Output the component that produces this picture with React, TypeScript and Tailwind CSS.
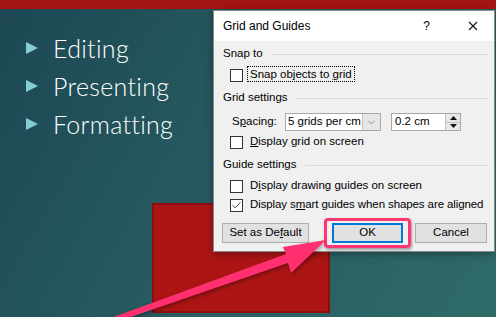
import { Check, ChevronDown } from 'lucide-react';

const bullets = ['Editing', 'Presenting', 'Formatting'];

// small section header with a rule running to the right
const GroupHeader = ({ label }: { label: string }) => (
  <div className="flex h-5 items-center pl-[9px] pr-[6px]">
    <span>{label}</span>
    <div className="ml-2 h-px flex-1 bg-[#dadada]" />
  </div>
);

const CheckRow = ({
  checked,
  children,
  className,
}: {
  checked?: boolean;
  children: React.ReactNode;
  className?: string;
}) => (
  <div className={`flex items-center pl-4 ${className ?? ''}`}>
    <div className="flex h-[13px] w-[13px] shrink-0 items-center justify-center border border-[#333] bg-white">
      {checked && <Check className="h-[11px] w-[11px] text-[#333]" strokeWidth={2} />}
    </div>
    <div className="ml-[7px]">{children}</div>
  </div>
);

const Btn = ({ children }: { children: React.ReactNode }) => (
  <div className="flex h-5 items-center justify-center border border-[#adadad] bg-[#e1e1e1]">{children}</div>
);

export default function App() {
  return (
    <div className="relative h-[317px] w-[496px] overflow-hidden bg-[linear-gradient(120deg,#1c4753_0%,#275a60_45%,#2e6b67_100%)] font-['Liberation_Sans',sans-serif]">
      {/* slide title bar */}
      <div className="h-[9px] bg-[#a51414]" />

      {/* bullets */}
      <div className="flex flex-col gap-[6px] pl-[26px] pt-[23px] font-['Lato',sans-serif] font-light text-white">
        {bullets.map((b) => (
          <div key={b} className="flex h-[32px] items-center">
            <svg width="12" height="12" viewBox="0 0 12 12" className="shrink-0">
              <polygon points="0,0 12,6 0,12" fill="#85cdd5" />
            </svg>
            <span className="ml-[15px] text-[25px] leading-none tracking-[0.3px]">{b}</span>
          </div>
        ))}
      </div>

      {/* red shape on the slide */}
      <div className="absolute left-[152px] top-[203px] h-[110px] w-[178px] border-2 border-[#8c0e0e] bg-[#ad1515]" />

      {/* dialog */}
      <div className="absolute left-[213px] top-[10px] h-[242px] w-[282px] whitespace-nowrap border border-[#8a8a8a] bg-[#f0f0f0] text-[11.5px] text-black shadow-[0_2px_8px_rgba(0,0,0,0.35)]">
        <div className="flex h-[30px] items-center bg-white pl-[9px] text-[12px]">
          <span>Grid and Guides</span>
          <span className="ml-auto mr-[38px]">?</span>
          <svg width="10" height="10" viewBox="0 0 10 10" className="mr-[16px]">
            <path d="M1 1L9 9M9 1L1 9" stroke="#111" strokeWidth="1.1" />
          </svg>
        </div>

        <div className="pt-[3px] leading-none">
          <GroupHeader label="Snap to" />
          <CheckRow className="h-[22px]">
            <span className="-ml-[3px] border border-dotted border-black px-[2px] py-[1px]">
              Snap objects to <u>g</u>rid
            </span>
          </CheckRow>

          <div className="mt-[2px]">
            <GroupHeader label="Grid settings" />
          </div>

          <div className="mt-[4px] flex h-5 items-center pl-[18px]">
            <span className="w-[53px]">
              S<u>p</u>acing:
            </span>
            <div className="flex h-[18px] w-[96px] items-center border border-[#a8a8a8] bg-white">
              <span className="pl-[2px]">5 grids per cm</span>
              <div className="ml-auto flex h-full w-[18px] items-center justify-center border-l border-[#c4c4c4] bg-[#e6e6e6]">
                <ChevronDown className="h-[11px] w-[11px] text-[#666]" strokeWidth={1.5} />
              </div>
            </div>
            <div className="ml-[10px] flex h-[18px] w-[70px] items-center border border-[#a8a8a8] bg-white">
              <span className="pl-[3px]">0.2 cm</span>
              <div className="ml-auto flex h-full w-[15px] flex-col border-l border-[#c4c4c4] bg-[#e9e9e9]">
                <div className="flex flex-1 items-center justify-center border-b border-[#c4c4c4]">
                  <svg width="7" height="4" viewBox="0 0 7 4">
                    <polygon points="0,4 7,4 3.5,0" fill="#111" />
                  </svg>
                </div>
                <div className="flex flex-1 items-center justify-center">
                  <svg width="7" height="4" viewBox="0 0 7 4">
                    <polygon points="0,0 7,0 3.5,4" fill="#111" />
                  </svg>
                </div>
              </div>
            </div>
          </div>

          <CheckRow className="h-5">
            <u>D</u>isplay grid on screen
          </CheckRow>

          <div className="mt-[3px]">
            <GroupHeader label="Guide settings" />
          </div>
          <CheckRow className="mt-[1px] h-5">
            D<u>i</u>splay drawing guides on screen
          </CheckRow>
          <CheckRow checked className="h-[18px]">
            <span className="tracking-[-0.1px]">
              Display s<u>m</u>art guides when shapes are aligned
            </span>
          </CheckRow>

          <div className="mt-[9px] flex items-center pl-[8px]">
            <div className="w-[87px]">
              <Btn>
                Set as De<u>f</u>ault
              </Btn>
            </div>
            <div className="relative ml-[23px] w-[71px]">
              <div className="flex h-5 items-center justify-center border-2 border-[#0078d7] bg-[#e1e1e1]">OK</div>
              <div className="absolute -inset-x-[8px] -bottom-[5px] -top-[5px] rounded-[4px] border-[3px] border-[#ff3676] shadow-[1px_2px_3px_rgba(0,0,0,0.35)]" />
            </div>
            <div className="ml-[12px] w-[72px]">
              <Btn>Cancel</Btn>
            </div>
          </div>
        </div>
      </div>

      {/* pink pointer arrow */}
      <svg
        className="pointer-events-none absolute left-0 top-0"
        width="496"
        height="317"
        viewBox="0 0 496 317"
        style={{ filter: 'drop-shadow(1px 2px 2px rgba(0,0,0,0.35))' }}
      >
        <polygon points="100,322 286,254 283,247 326,240 291,273 288,263 116,322" fill="#ff2f70" />
      </svg>
    </div>
  );
}
